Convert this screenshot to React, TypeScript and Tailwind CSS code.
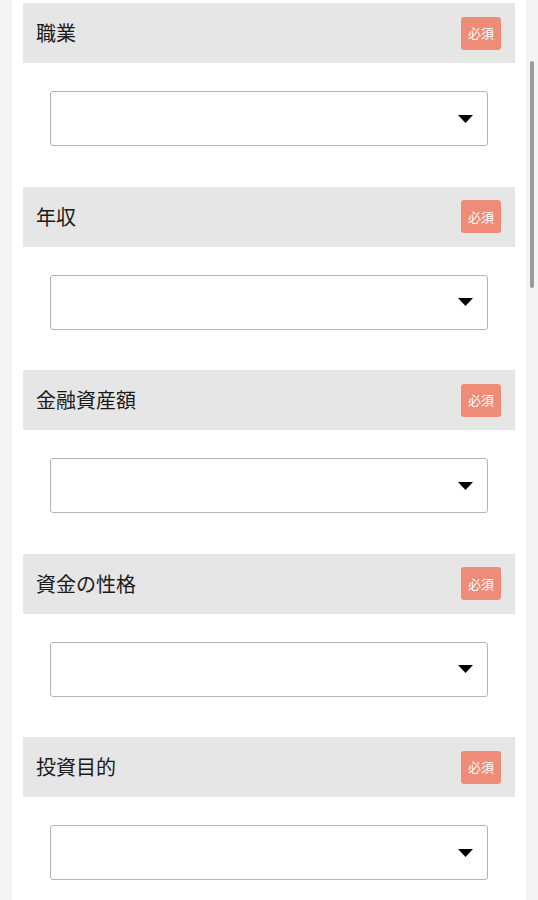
const fields = ['職業', '年収', '金融資産額', '資金の性格', '投資目的'];

function Field({ label }: { label: string }) {
  return (
    <div className="pb-[40.5px]">
      <div className="flex h-[60px] items-center justify-between bg-[#e6e6e6] pl-[13px] pr-[14px]">
        <span className="text-[20px] leading-none text-[#1a1a1a]">{label}</span>
        <span className="flex h-[33px] w-[40px] items-center justify-center rounded-[3px] bg-[#ef8c78] text-[13px] text-white">
          必須
        </span>
      </div>
      <div className="mt-[28px] px-[27px]">
        <div className="flex h-[55px] items-center justify-end rounded-[3px] border border-[#b3b3b3] bg-white pr-[14px]">
          <svg width="15" height="8" viewBox="0 0 15 8">
            <path d="M0 0h15L7.5 8z" fill="#000" />
          </svg>
        </div>
      </div>
    </div>
  );
}

export default function App() {
  return (
    <div
      className="relative flex h-[900px] overflow-hidden bg-[#f4f4f4]"
      style={{ fontFamily: '"Noto Sans CJK JP", "Noto Sans", sans-serif' }}
    >
      <div className="w-[12px] shrink-0" />
      <div className="w-[514px] shrink-0 bg-white px-[11px] pt-[3px]">
        {fields.map((f) => (
          <Field key={f} label={f} />
        ))}
      </div>
      {/* scrollbar thumb */}
      <div className="absolute right-[4px] top-[61px] h-[227px] w-[4px] rounded-full bg-[#9a9a9a]" />
    </div>
  );
}
